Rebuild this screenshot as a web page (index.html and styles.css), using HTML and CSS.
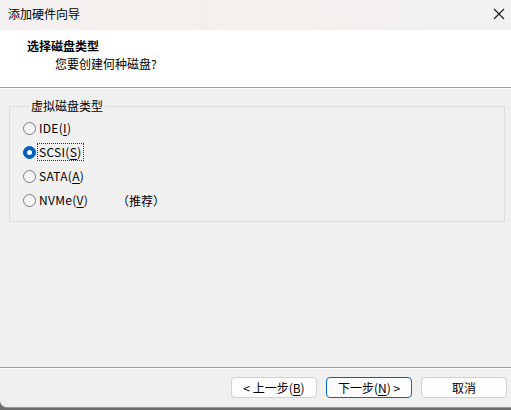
FILE: index.html
```html
<!DOCTYPE html>
<html lang="zh-CN">
<head>
<meta charset="utf-8">
<title>添加硬件向导</title>
<link rel="stylesheet" href="styles.css">
</head>
<body>
<div class="window">
  <div class="titlebar">
    <span class="title">添加硬件向导</span>
    <span class="close">
      <svg width="12" height="12" viewBox="0 0 12 12"><path d="M1 1 L11 11 M11 1 L1 11" stroke="#1a1a1a" stroke-width="1.1" fill="none"/></svg>
    </span>
  </div>
  <div class="header">
    <div class="h-title">选择磁盘类型</div>
    <div class="h-sub">您要创建何种磁盘?</div>
  </div>
  <div class="content">
    <fieldset class="group">
      <legend class="legend">虚拟磁盘类型</legend>
      <div class="row"><span class="radio"></span><span class="lbl">IDE(<u>I</u>)</span></div>
      <div class="row"><span class="radio checked"></span><span class="lbl focus">SCSI(<u>S</u>)</span></div>
      <div class="row"><span class="radio"></span><span class="lbl">SATA(<u>A</u>)</span></div>
      <div class="row"><span class="radio"></span><span class="lbl">NVMe(<u>V</u>)</span><span class="rec">（推荐）</span></div>
    </fieldset>
  </div>
  <div class="footer">
    <button class="btn">&lt; 上一步(<u>B</u>)</button>
    <button class="btn default">下一步(<u>N</u>) &gt;</button>
    <button class="btn">取消</button>
  </div>
</div>
</body>
</html>
```
FILE: styles.css
```css
* { box-sizing: border-box; }
html, body { margin: 0; padding: 0; }
body {
  width: 511px;
  height: 410px;
  background: #6e6e6e;
  font-family: "Noto Sans CJK SC", "Noto Sans", sans-serif;
  font-size: 12px;
  color: #000;
  overflow: hidden;
}
.window {
  height: 408px;
  display: flex;
  flex-direction: column;
  background: #f0f0f0;
  border-bottom: 1px solid #9a9a9a;
  border-radius: 0 0 0 7px;
  overflow: hidden;
}
.titlebar {
  height: 30px;
  flex: none;
  display: flex;
  align-items: center;
  justify-content: space-between;
  padding: 0 6px 0 8px;
  background: linear-gradient(90deg, #f3f1f0 0%, #f5efec 40%, #f2f2f2 100%);
}
.title { line-height: 16px; margin-top: -2px; }
.close { display: flex; width: 12px; height: 12px; margin-right: 0; margin-top: -2px; }
.header {
  height: 58px;
  flex: none;
  background: #fff;
  border-bottom: 1px solid #a0a0a0;
  box-shadow: 0 1px 0 #ffffff;
  padding: 8px 0 0 27px;
}
.h-title { font-weight: bold; line-height: 16px; }
.h-sub { line-height: 16px; margin-top: 2px; padding-left: 28px; }
.content {
  flex: 1;
  padding: 10px 6px 0 9px;
}
.group {
  margin: 0;
  border: 1px solid #dcdcdc;
  padding: 2px 0 9px 13px;
  min-width: 0;
}
.legend {
  margin-left: 6px;
  padding: 0 2px;
  line-height: 16px;
}
.row {
  height: 24px;
  display: flex;
  align-items: center;
}
.radio {
  width: 13px;
  height: 13px;
  border-radius: 50%;
  border: 1px solid #7a7a7a;
  background: #f7f7f7;
  flex: none;
  margin-right: 1px;
  position: relative;
}
.radio.checked {
  border-color: #005fb8;
  background: #005fb8;
}
.radio.checked::after {
  content: "";
  position: absolute;
  left: 3px;
  top: 3px;
  width: 5px;
  height: 5px;
  border-radius: 50%;
  background: #fff;
}
.lbl {
  line-height: 14px;
  padding: 1px 1px;
  border: 1px solid transparent;
  letter-spacing: 0.3px;
}
.lbl.focus { border: 1px dotted #333; }
.rec { margin-left: 27px; }
u { text-underline-offset: 2px; }
.footer {
  height: 40px;
  flex: none;
  border-top: 1px solid #a0a0a0;
  box-shadow: inset 0 1px 0 #fafafa;
  display: flex;
  justify-content: flex-end;
  align-items: flex-start;
  gap: 9px;
  padding: 9px 4px 0 0;
}
.btn {
  width: 86px;
  height: 21px;
  font: inherit;
  color: #000;
  background: #fdfdfd;
  border: 1px solid #d0d0d0;
  border-radius: 4px;
  padding: 0;
  line-height: 17px;
}
.btn.default { border-color: #0067c0; }
```
